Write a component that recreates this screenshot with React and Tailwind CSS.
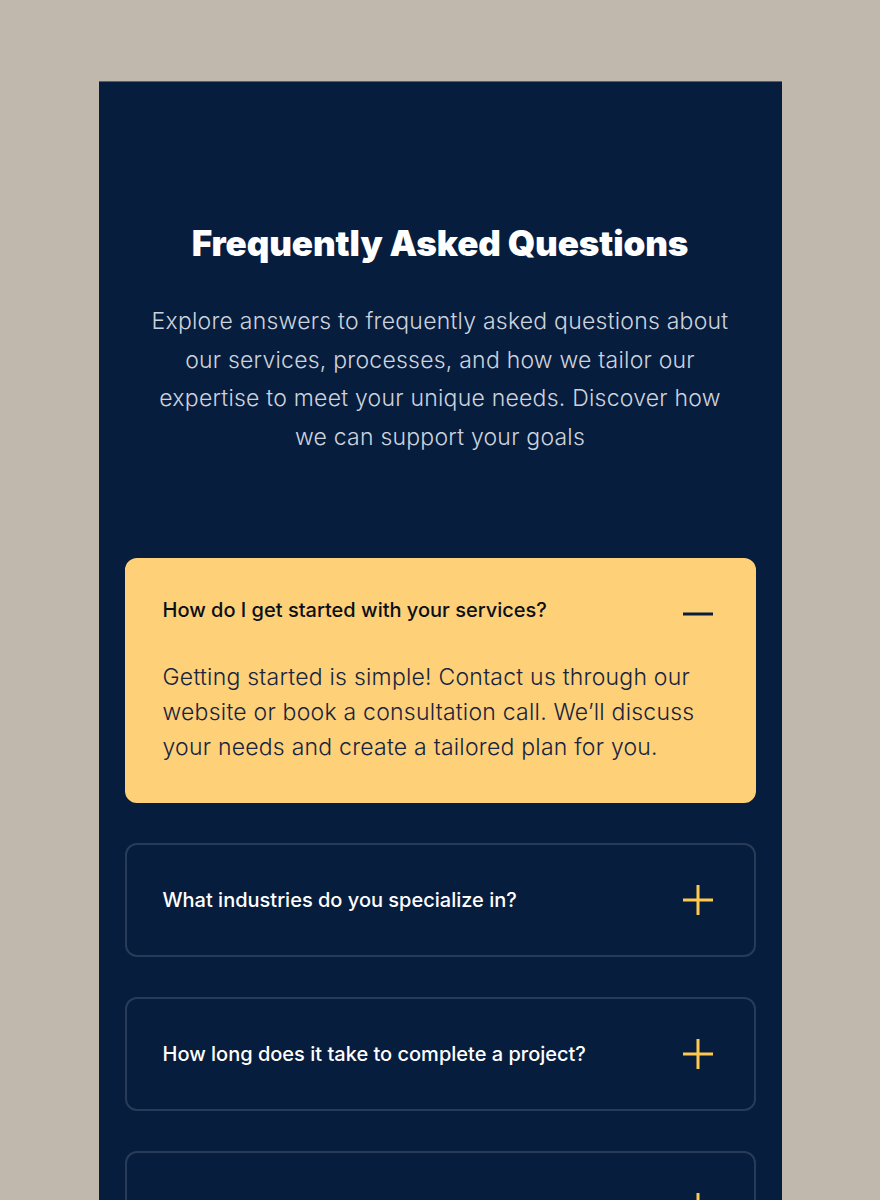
import React, { useState } from "react";

const faqs = [
  {
    q: "How do I get started with your services?",
    a: "Getting started is simple! Contact us through our website or book a consultation call. We\u2019ll discuss your needs and create a tailored plan for you.",
  },
  {
    q: "What industries do you specialize in?",
    a: "We work with startups, growing businesses and established brands across technology, retail, healthcare and professional services.",
  },
  {
    q: "How long does it take to complete a project?",
    a: "Timelines depend on scope, but most projects are delivered within four to eight weeks from kickoff.",
  },
  {
    q: "What if I need revisions or changes?",
    a: "Revisions are part of our process. We refine the work together until it fits your goals.",
  },
];

function PlusIcon() {
  return (
    <svg width="30" height="30" viewBox="0 0 30 30" fill="none">
      <path d="M15 0V30M0 15H30" stroke="#FFC84E" strokeWidth="3" />
    </svg>
  );
}

function MinusIcon() {
  return (
    <svg width="30" height="30" viewBox="0 0 30 30" fill="none">
      <path d="M0 19H30" stroke="#0A1E3C" strokeWidth="3" />
    </svg>
  );
}

function FaqItem({ item, open, onToggle }) {
  return (
    <div
      className={
        open
          ? "rounded-[12px] border-2 border-[#FED077] bg-[#FED077] px-[36px] pt-[35px] pb-[36px]"
          : "rounded-[12px] border-2 border-[#283C5A] px-[36px] py-[40px]"
      }
    >
      <button
        type="button"
        onClick={onToggle}
        className="flex w-full items-center justify-between text-left"
      >
        <span
          className={
            "text-[20px] leading-[29px] font-medium tracking-[0em] " +
            (open ? "text-[#0B0F19]" : "text-white")
          }
        >
          {item.q}
        </span>
        <span className="mr-[5px] flex shrink-0">
          {open ? <MinusIcon /> : <PlusIcon />}
        </span>
      </button>
      {open && (
        <p className="mt-[35px] max-w-[550px] text-[23px] leading-[35px] font-light tracking-[0.01em] text-[#17243F]">
          {item.a}
        </p>
      )}
    </div>
  );
}

export default function App() {
  const [openIndex, setOpenIndex] = useState(0);
  return (
    <div
      className="min-h-[1200px] bg-[#C0B8AD] pt-[81px]"
      style={{ fontFamily: "Inter, 'Open Sans', sans-serif" }}
    >
      <section className="mx-auto w-[683px] border-t border-[#51617a] bg-[#071D3D] px-[26px] pt-[141px] pb-[80px]">
        <h2 className="text-center text-[35px] leading-[41px] font-black tracking-[-0.003em] text-white">
          Frequently Asked Questions
        </h2>
        <p className="mx-auto mt-[38px] max-w-[592px] text-center text-[23px] leading-[38.5px] font-light tracking-[0.01em] text-[#CDD3DD]">
          Explore answers to frequently asked questions about our services, processes, and how we tailor our expertise to meet your unique needs. Discover how we can support your goals
        </p>
        <div className="mt-[102px] flex flex-col gap-[40px]">
          {faqs.map((item, i) => (
            <FaqItem
              key={item.q}
              item={item}
              open={openIndex === i}
              onToggle={() => setOpenIndex(openIndex === i ? -1 : i)}
            />
          ))}
        </div>
      </section>
    </div>
  );
}
